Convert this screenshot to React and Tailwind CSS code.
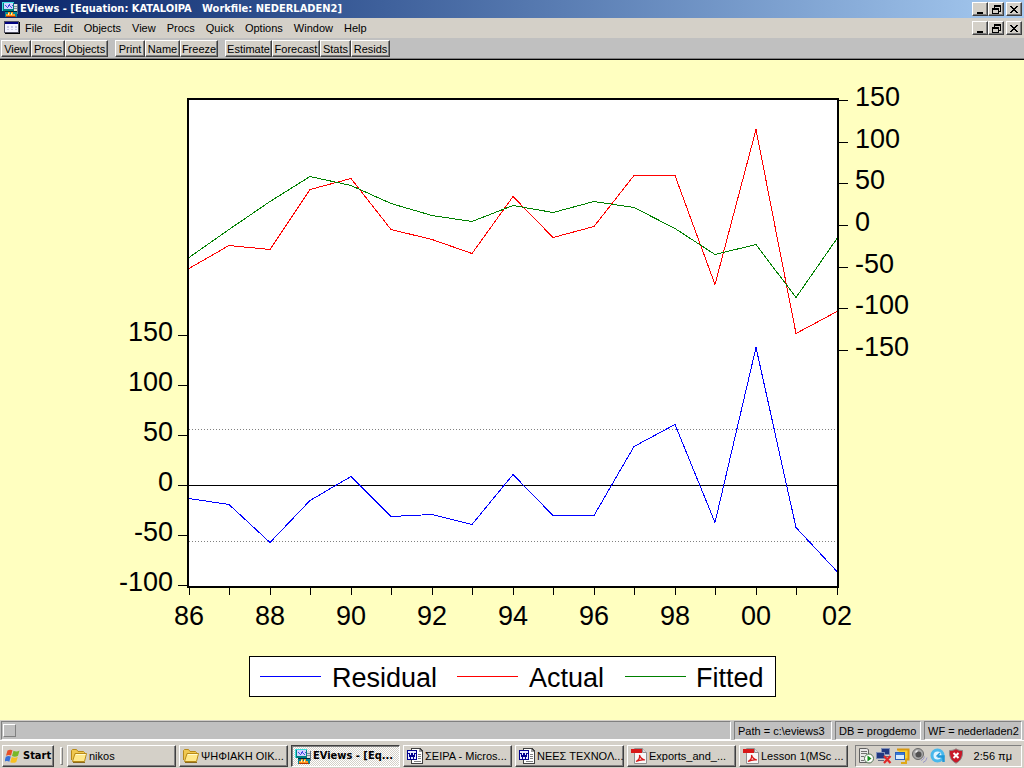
import React from 'react';

const raised = 'border border-t-white border-l-white border-r-[#404040] border-b-[#404040] shadow-[inset_-1px_-1px_0_#808080]';
const sunken = 'border border-t-[#808080] border-l-[#808080] border-r-white border-b-white';

const menus = ['File', 'Edit', 'Objects', 'View', 'Procs', 'Quick', 'Options', 'Window', 'Help'];

const toolGroups = [
  [['View', 'w-[30px]'], ['Procs', 'w-[34px]'], ['Objects', 'w-[43px]']],
  [['Print', 'w-[30px]'], ['Name', 'w-[35px]'], ['Freeze', 'w-[38px]']],
  [['Estimate', 'w-[47px]'], ['Forecast', 'w-[48px]'], ['Stats', 'w-[31px]'], ['Resids', 'w-[39px]']],
];

/* ---------- icons ---------- */

const EViewsIcon = () => (
  <svg className="shrink-0" width="16" height="16" viewBox="0 0 16 16" shapeRendering="crispEdges">
    <rect x="11" y="3" width="5" height="10" fill="#607080" />
    <rect x="11" y="3" width="4" height="9" fill="#e0e0e0" />
    <path d="M12 5h3v1h-3zM12 7h3v1h-3z" fill="#8090a0" />
    <rect x="0" y="1" width="12" height="9" fill="#008080" />
    <path d="M0 1h12v1H1v8H0z" fill="#40e0e0" />
    <rect x="2" y="2" width="9" height="6" fill="#d0d4ff" />
    <path d="M3 4h1v1h1v1h1V4h1V3h1v2h1v1h1V4h1v1h-1v2H9V6H8V5H7v1H6v1H5V6H4V5H3z" fill="#4848e0" />
    <rect x="3" y="10" width="12" height="6" fill="#008898" />
    <rect x="3" y="10" width="12" height="1" fill="#002838" />
    <path d="M4 15v-2h2v-2h2v2h1v-2h2v2h2v2z" fill="#ff9820" />
    <path d="M6 12h1v2H6zM9 12h1v2H9z" fill="#fff8b0" />
    <rect x="4" y="15" width="10" height="1" fill="#b83800" />
  </svg>
);

const ChildIcon = () => (
  <svg width="16" height="14" viewBox="0 0 16 14" shapeRendering="crispEdges">
    <rect x="1" y="1" width="15" height="12" fill="#000" />
    <rect x="0" y="0" width="15" height="12" fill="#505060" />
    <rect x="1" y="1" width="13" height="10" fill="#f4f4ff" />
    <rect x="1" y="1" width="13" height="2" fill="#000080" />
    <path d="M3 5h2v2H3zM7 5h2v2H7zM11 5h2v2h-2zM3 8h2v1H3zM7 8h2v1H7zM11 8h2v1h-2z" fill="#c8c8e4" />
  </svg>
);

const FolderIcon = () => (
  <svg className="shrink-0" width="16" height="16" viewBox="0 0 16 16">
    <path d="M.5 12V2.500L1.500 1.500H5.500l1.500 2H12.500l1 1v2" fill="#f0c850" stroke="#b88a18" />
    <path d="M1.500 13.500L4 5.500H15.500L13.500 13.500z" fill="#ffe88a" stroke="#b88a18" />
    <path d="M5 6.500h9.500" stroke="#fffbd0" />
    <path d="M2 14.500h12" stroke="#8a6a20" />
  </svg>
);

const WordIcon = () => (
  <svg className="shrink-0" width="16" height="16" viewBox="0 0 16 16" shapeRendering="crispEdges">
    <path d="M4 0h9l3 3v13H4z" fill="#404040" />
    <path d="M5 1h7v3h3v11H5z" fill="#fff" />
    <path d="M12 1l3 3h-3z" fill="#a0a0a0" />
    <path d="M11 6h3v1h-3zM11 8h3v1h-3zM11 10h3v1h-3zM7 13h7v1H7z" fill="#808080" />
    <rect x="0" y="2" width="10" height="10" fill="#000090" />
    <rect x="1" y="3" width="8" height="8" fill="#e8ecff" />
    <path d="M2 5l1.500 4.500L5 5.500l1.500 4L8 5" stroke="#000090" strokeWidth="1.500" fill="none" />
  </svg>
);

const PdfIcon = () => (
  <svg className="shrink-0" width="16" height="16" viewBox="0 0 16 16">
    <path d="M3.500 .5h8l4 4v11h-12z" fill="#f8f8f8" stroke="#909090" />
    <path d="M11.500 .5v4h4" fill="#ddd" stroke="#909090" />
    <rect x="0" y="1" width="11" height="4" fill="#d81818" />
    <path d="M5 13.500c3-1.500 4-4 3.500-6.500 1 3.500 2.500 4.500 5.500 5-3-.5-6 0-9 1.500z" fill="none" stroke="#d81818" strokeWidth="1.200" />
  </svg>
);

const WindowsFlag = () => (
  <svg className="shrink-0" width="16" height="16" viewBox="0 0 16 16">
    <path d="M2.500 2.500c2-1.200 3.500-1 5-.2L6 7.500C4.500 6.700 3 6.700 1 7.700z" fill="#e85028" />
    <path d="M8.500 2.700c2 1 4 1 6-.2L13 7.800c-2 1.100-4 1.100-6 .2z" fill="#78b828" />
    <path d="M.8 8.700c2-1 3.500-1 5-.2L4.300 13.700c-1.500-.8-3-.8-5 .2z" fill="#3870d8" />
    <path d="M6.800 9c2 1 4 1 6-.2L11.300 14c-2 1.100-4 1.100-6 .2z" fill="#f8c020" />
  </svg>
);

const TrayIcons = () => (
  <div className="flex gap-[2px]">
    <svg width="16" height="16" viewBox="0 0 16 16">
      <path d="M1.500 .5h7l2 1v13h-9z" fill="#e8e8e8" stroke="#606060" />
      <path d="M3 3.500h6M3 5.500h6M3 8.500h3M3 12.500h3" stroke="#707070" />
      <circle cx="11" cy="10.500" r="4.500" fill="#fff" stroke="#507050" />
      <path d="M9.500 7.500v6l4-3z" fill="#109018" />
    </svg>
    <svg width="16" height="16" viewBox="0 0 16 16">
      <rect x="5.500" y=".5" width="8" height="6" fill="#203880" stroke="#8090b8" />
      <path d="M7 8h6v1H7z" fill="#606880" />
      <rect x=".5" y="4.500" width="8" height="6" fill="#203880" stroke="#8090b8" />
      <path d="M2 12h6v1H2z" fill="#606880" />
      <path d="M8 8l6.500 7M14.500 8L8 15" stroke="#e02828" strokeWidth="2.200" />
    </svg>
    <svg width="16" height="16" viewBox="0 0 16 16">
      <path d="M3 1.500h11.500v10h-3" fill="#f8d030" stroke="#d89810" strokeWidth="2" />
      <rect x="1.500" y="4.500" width="9" height="7" fill="#d8ecff" stroke="#2860b8" />
      <path d="M2 5h8v2H2z" fill="#3878d8" />
      <path d="M12 11v4H7" fill="none" stroke="#e0a818" strokeWidth="2" />
    </svg>
    <svg width="16" height="16" viewBox="0 0 16 16">
      <circle cx="6" cy="6" r="5.500" fill="#a8a8a8" stroke="#686868" />
      <circle cx="6.500" cy="6.500" r="3" fill="#505050" />
      <path d="M3.500 4.500l2-2" stroke="#f0f0f0" strokeWidth="1.500" />
      <path d="M9 12.500q3-1 3.500-4M11 14.500q3.500-1 4-5" stroke="#9898c8" fill="none" />
    </svg>
    <svg width="16" height="16" viewBox="0 0 16 16">
      <circle cx="7.500" cy="7.500" r="5.500" fill="#e0f4ff" stroke="#48b8ec" strokeWidth="3" />
      <path d="M7.500 8.500h6v5.500" fill="none" stroke="#2098d8" strokeWidth="2.500" />
      <path d="M10 5L6.500 8.500" stroke="#2098d8" strokeWidth="1.500" />
    </svg>
    <svg width="16" height="16" viewBox="0 0 16 16">
      <path d="M8 .8c2 1.400 4 1.700 6.500 1.700C15 9 12.500 13 8 15.200 3.500 13 1 9 1.500 2.500 4 2.500 6 2.200 8 .8z" fill="#c81828" stroke="#888" />
      <path d="M5.500 5l5 5M10.500 5l-5 5" stroke="#fff" strokeWidth="2" />
    </svg>
  </div>
);

/* ---------- window controls ---------- */

const glyphs = {
  Minimize: <rect x="3" y="8" width="6" height="2" />,
  Restore: <path d="M4 1h7v7H9V7h1V3H5v1H4zM2 4h7v6H2zM3 6v3h5V6z" fillRule="evenodd" />,
  Close: <path d="M2 2h2v1h1v1h2V3h1V2h2v1H9v1H8v1H7v1h1v1h1v1h1v1H8V8H7V7H5v1H4v1H2V8h1V7h1V6h1V5H4V4H3V3H2z" />,
};

const WindowControls = () => (
  <div className="flex">
    {['Minimize', 'Restore', 'Close'].map(name => (
      <button key={name} aria-label={name} className={`flex h-[14px] w-4 items-center justify-center bg-[#d4d0c8] last:ml-[2px] ${raised}`}>
        <svg width="12" height="11" viewBox="0 0 12 11" shapeRendering="crispEdges">{glyphs[name]}</svg>
      </button>
    ))}
  </div>
);

/* ---------- graph ---------- */

const series = {
  residual: [-13, -19, -57, -15, 9, -31, -29, -39, 11, -30, -30, 39, 61, -37, 138, -42, -86],
  actual: [-52, -24, -29, 43, 56, -5, -17, -34, 35, -14, -1, 60, 60, -71, 115, -130, -103],
  fitted: [-38, -5, 29, 59, 48, 26, 12, 5, 24, 16, 29, 22, -4, -35, -23, -86, -16],
};
const years = ['86', '88', '90', '92', '94', '96', '98', '00', '02'];

const xAt = i => Math.floor(189 + i * 40.5);
const leftY = v => Math.round(425 - v);
const rightY = v => Math.round(165 - v * 0.833);
const line = (values, yAt) => values.map((v, i) => `${xAt(i)},${yAt(v) + 0.5}`).join(' ');

const Graph = () => (
  <svg className="block w-full" viewBox="0 0 1024 660" fontFamily='"Liberation Sans", Arial, sans-serif' fontSize="27">
    <g shapeRendering="crispEdges" fill="none" stroke="#000">
      <rect x="188" y="39" width="650" height="488" fill="#fff" strokeWidth="2" />
      <path d="M189 369.500H837M189 481.500H837" stroke="#808080" strokeDasharray="1 2" />
      <path d="M178 425.500H837" />
      {[150, 100, 50, -50, -100].map(v => <path key={v} d={`M178 ${leftY(v) + 0.5}h10`} />)}
      {[150, 100, 50, 0, -50, -100, -150].map(v => <path key={v} d={`M838 ${rightY(v) + 0.5}h10`} />)}
      {series.residual.map((_, i) => <path key={i} d={`M${xAt(i) + 0.5} 527v8`} />)}
      <polyline points={line(series.residual, leftY)} stroke="#0000ff" />
      <polyline points={line(series.actual, rightY)} stroke="#ff0000" />
      <polyline points={line(series.fitted, rightY)} stroke="#008000" />
    </g>

    <g textAnchor="end">
      {[150, 100, 50, 0, -50, -100].map(v => <text key={v} x="173" y={leftY(v) + 6}>{v}</text>)}
    </g>
    {[150, 100, 50, 0, -50, -100, -150].map(v => <text key={v} x="855" y={rightY(v) + 6}>{v}</text>)}
    <g textAnchor="middle">
      {years.map((y, i) => <text key={y} x={xAt(i * 2)} y="565">{y}</text>)}
    </g>

    {/* legend */}
    <g shapeRendering="crispEdges" fill="none">
      <rect x="249.500" y="596.500" width="526" height="40" fill="#fff" stroke="#000" />
      <path d="M260 616.500h61" stroke="#0000ff" />
      <path d="M457 616.500h61" stroke="#ff0000" />
      <path d="M625 616.500h61" stroke="#008000" />
    </g>
    <text x="332" y="627">Residual</text>
    <text x="529" y="627">Actual</text>
    <text x="696" y="627">Fitted</text>
  </svg>
);

/* ---------- bars ---------- */

const tasks = [
  { icon: FolderIcon, label: 'nikos' },
  { icon: FolderIcon, label: 'ΨΗΦΙΑΚΗ ΟΙΚ...' },
  { icon: EViewsIcon, label: 'EViews - [Eq...', active: true },
  { icon: WordIcon, label: 'ΣΕΙΡΑ - Micros...' },
  { icon: WordIcon, label: 'ΝΕΕΣ ΤΕΧΝΟΛ...' },
  { icon: PdfIcon, label: 'Exports_and_...' },
  { icon: PdfIcon, label: 'Lesson 1(MSc ...' },
];

const StatusBar = () => (
  <div className="flex h-5 gap-[3px] border-t border-[#d4d0c8] bg-[#c0c0c0] pr-[2px] pl-[1px]">
    <div className={`flex flex-1 items-center pl-[1px] ${sunken}`}>
      <div className="h-[13px] w-[13px] border border-t-white border-l-white border-r-[#808080] border-b-[#808080]" />
    </div>
    <div className={`w-[98px] pl-[3px] leading-[18px] whitespace-nowrap ${sunken}`}>Path = c:\eviews3</div>
    <div className={`w-[86px] pl-[3px] leading-[18px] whitespace-nowrap ${sunken}`}>DB = progdemo</div>
    <div className={`w-[98px] pl-[3px] leading-[18px] whitespace-nowrap ${sunken}`}>WF = nederladen2</div>
  </div>
);

const Taskbar = () => (
  <div className="flex h-7 items-center border-t border-white bg-[#d4d0c8] px-[2px] pt-[2px]">
    <button className={`flex h-[22px] w-[52px] items-center gap-[2px] pl-[2px] font-['DejaVu_Sans_Condensed','DejaVu_Sans',sans-serif] font-bold ${raised}`}>
      <WindowsFlag />Start
    </button>
    <div className="mr-1 ml-[6px] h-[18px] w-[3px] border border-t-white border-l-white border-r-[#808080] border-b-[#808080]" />
    <div className="flex flex-1 gap-[3px]">
      {tasks.map(({ icon: Icon, label, active }) => (
        <button
          key={label}
          className={`flex h-[22px] min-w-0 flex-1 items-center gap-[2px] pl-[3px] whitespace-nowrap ${active
            ? "border border-t-[#404040] border-l-[#404040] border-r-white border-b-white bg-[repeating-conic-gradient(#fff_0_25%,#d4d0c8_0_50%)] bg-[length:2px_2px] font-['DejaVu_Sans_Condensed','DejaVu_Sans',sans-serif] font-bold shadow-[inset_1px_1px_0_#808080]"
            : raised}`}
        >
          <Icon />
          <span>{label}</span>
        </button>
      ))}
    </div>
    <div className={`ml-[7px] flex h-[22px] w-[167px] items-center justify-between pr-[9px] pl-[2px] ${sunken}`}>
      <TrayIcons />
      <span>2:56 πμ</span>
    </div>
  </div>
);

export default function App() {
  return (
    <div className="flex min-h-screen flex-col bg-[#ffffc0] font-['Liberation_Sans',Arial,sans-serif] text-[11px] leading-[14px] text-black">
      <header>
        <div className="flex h-[18px] items-center justify-between bg-linear-to-r from-[#0a246a] to-[#a6caf0] pr-[2px] pl-[2px]">
          <div className="flex items-center gap-[2px]">
            <EViewsIcon />
            <h1 className="font-['DejaVu_Sans_Condensed','DejaVu_Sans',sans-serif] font-bold whitespace-pre text-white">{'EViews - [Equation: KATALOIPA   Workfile: NEDERLADEN2]'}</h1>
          </div>
          <WindowControls />
        </div>

        <div className="flex h-5 items-center justify-between bg-[#d4d0c8] pr-[2px] pl-1">
          <nav className="flex items-center">
            <ChildIcon />
            <div className="ml-[5px] flex gap-[11px]">
              {menus.map(m => <button key={m}>{m}</button>)}
            </div>
          </nav>
          <WindowControls />
        </div>

        <div className="flex h-[22px] gap-[7px] border-b border-black bg-[#c0c0c0] pt-[2px] pl-[1px] shadow-[inset_0_-1px_0_#808080]">
          {toolGroups.map((group, i) => (
            <div key={i} className="flex">
              {group.map(([label, width]) => (
                <button key={label} className={`h-[17px] bg-[#d4d0c8] text-center ${width} ${raised}`}>{label}</button>
              ))}
            </div>
          ))}
        </div>
      </header>

      <main className="flex-1"><Graph /></main>

      <footer>
        <StatusBar />
        <Taskbar />
      </footer>
    </div>
  );
}
